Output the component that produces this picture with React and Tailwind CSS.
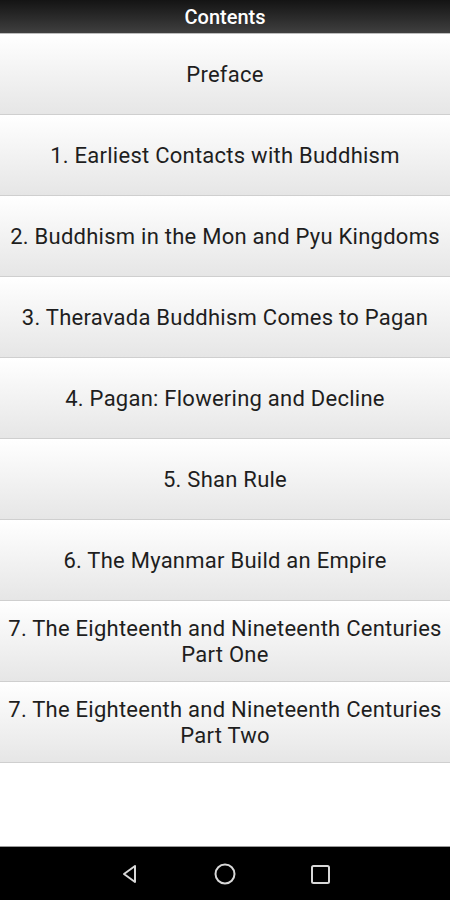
import React from "react";

const items = [
  ["Preface"],
  ["1. Earliest Contacts with Buddhism"],
  ["2. Buddhism in the Mon and Pyu Kingdoms"],
  ["3. Theravada Buddhism Comes to Pagan"],
  ["4. Pagan: Flowering and Decline"],
  ["5. Shan Rule"],
  ["6. The Myanmar Build an Empire"],
  ["7. The Eighteenth and Nineteenth Centuries", "Part One"],
  ["7. The Eighteenth and Nineteenth Centuries", "Part Two"],
];

export default function App() {
  return (
    <div
      className="w-[450px] h-[900px] flex flex-col bg-white overflow-hidden"
      style={{ fontFamily: "Roboto, 'Liberation Sans', sans-serif" }}
    >
      <div className="h-[34px] shrink-0 flex items-center justify-center pt-[1px] bg-gradient-to-b from-[#141414] to-[#404040] border-b border-[#bdbdbd]">
        <span className="text-white text-[20px] font-medium">Contents</span>
      </div>
      <div className="flex flex-col">
        {items.map((lines, i) => (
          <div
            key={i}
            className="h-[81px] flex flex-col items-center justify-center pt-[2px] bg-gradient-to-b from-white to-[#e6e6e6] border-b border-[#cfcfcf] text-[#1e1e1e] text-[22px] tracking-[0.25px] leading-[26px] text-center"
          >
            {lines.map((l, j) => (
              <div key={j}>{l}</div>
            ))}
          </div>
        ))}
      </div>
      <div className="flex-1" />
      <div className="h-[54px] shrink-0 bg-black border-t border-[#9a9a9a] flex items-center justify-center gap-[72px]">
        <svg width="22" height="22" viewBox="0 0 22 22" fill="none" stroke="#d8d8d8" strokeWidth="2" strokeLinejoin="round">
          <path d="M16 3 L5 11 L16 19 Z" />
        </svg>
        <svg width="24" height="24" viewBox="0 0 24 24" fill="none" stroke="#d8d8d8" strokeWidth="2">
          <circle cx="12" cy="12" r="9.5" />
        </svg>
        <svg width="22" height="22" viewBox="0 0 22 22" fill="none" stroke="#d8d8d8" strokeWidth="2">
          <rect x="3" y="3" width="17" height="17" rx="1.5" />
        </svg>
      </div>
    </div>
  );
}
